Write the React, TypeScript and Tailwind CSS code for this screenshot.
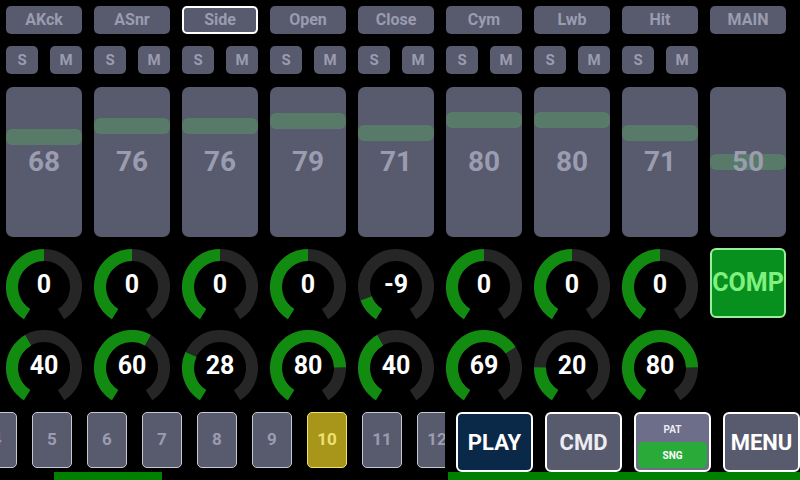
import React from 'react';

type Channel = { name: string; vol: number; pitch: number; level: number; selected?: boolean };

const channels: Channel[] = [
    { name: 'AKck', vol: 68, pitch: 0, level: 40 },
    { name: 'ASnr', vol: 76, pitch: 0, level: 60 },
    { name: 'Side', vol: 76, pitch: 0, level: 28, selected: true },
    { name: 'Open', vol: 79, pitch: 0, level: 80 },
    { name: 'Close', vol: 71, pitch: -9, level: 40 },
    { name: 'Cym', vol: 80, pitch: 0, level: 69 },
    { name: 'Lwb', vol: 80, pitch: 0, level: 20 },
    { name: 'Hit', vol: 71, pitch: 0, level: 80 },
];

const steps = [4, 5, 6, 7, 8, 9, 10, 11, 12];
const ACTIVE_STEP = 10;

const START = -148;
const SWEEP = 296;

const polar = (deg: number, r: number) => {
    const rad = (deg * Math.PI) / 180;
    return [38 + r * Math.sin(rad), 38 - r * Math.cos(rad)];
};

const arc = (from: number, to: number, r: number) => {
    const [x1, y1] = polar(from, r);
    const [x2, y2] = polar(to, r);
    const large = to - from > 180 ? 1 : 0;
    return `M ${x1} ${y1} A ${r} ${r} 0 ${large} 1 ${x2} ${y2}`;
};

const Knob: React.FC<{ value: number; min: number; max: number }> = ({ value, min, max }) => {
    const frac = (value - min) / (max - min);
    const end = START + SWEEP * frac;
    return (
        <div className="relative w-[76px] h-[76px]">
            <svg width="76" height="76" viewBox="0 0 76 76">
                <path d={arc(START, START + SWEEP, 32)} fill="none" stroke="#262626" strokeWidth="12" />
                {frac > 0 && <path d={arc(START, end, 32)} fill="none" stroke="#118c11" strokeWidth="12" />}
            </svg>
            <div className="absolute inset-0 flex items-center justify-center pb-1 text-white font-bold text-[25px]">
                {value}
            </div>
        </div>
    );
};

const Fader: React.FC<{ value: number }> = ({ value }) => (
    <div className="relative w-[76px] h-[150px] rounded-[7px] bg-[#585a6e] overflow-hidden">
        <div
            className="absolute left-0 right-0 h-[16px] rounded-[6px] bg-[#587a68]"
            style={{ top: `${Math.max(0, 137 - 1.4 * value)}px` }}
        />
        <div className="absolute inset-0 flex items-center justify-center text-[28px] font-bold text-[#9a9cb0]">
            {value}
        </div>
    </div>
);

export default function App() {
    const grid = 'grid grid-cols-[repeat(9,76px)] gap-x-3 px-[6px]';
    return (
        <div className="w-[800px] h-[480px] bg-black overflow-hidden flex flex-col" style={{ fontFamily: 'Roboto, "Liberation Sans", sans-serif' }}>
            {/* Channel names */}
            <div className={`${grid} pt-[6px]`}>
                {[...channels.map((c) => c.name), 'MAIN'].map((n, i) => (
                    <div
                        key={n}
                        className={`h-[28px] rounded-[5px] bg-[#585a6e] flex items-center justify-center text-[16px] font-bold text-[#9a9cb0] ${i === 2 ? 'border-2 border-white' : ''}`}
                    >
                        {n}
                    </div>
                ))}
            </div>

            {/* Solo / Mute */}
            <div className={`${grid} mt-3`}>
                {channels.map((c) => (
                    <div key={c.name} className="flex justify-between">
                        {['S', 'M'].map((l) => (
                            <div key={l} className="w-[32px] h-[28px] rounded-[5px] bg-[#585a6e] flex items-center justify-center text-[15px] font-bold text-[#9a9cb0]">
                                {l}
                            </div>
                        ))}
                    </div>
                ))}
            </div>

            {/* Faders */}
            <div className={`${grid} mt-[13px]`}>
                {channels.map((c) => (
                    <Fader key={c.name} value={c.vol} />
                ))}
                <Fader value={50} />
            </div>

            {/* Pitch knobs */}
            <div className={`${grid} mt-3`}>
                {channels.map((c) => (
                    <Knob key={c.name} value={c.pitch} min={-12} max={12} />
                ))}
                <div className="h-[70px] -mt-px rounded-[6px] bg-[#07901e] border-2 border-[#98f098] flex items-center justify-center text-[25px] font-bold text-[#80f080]">
                    COMP
                </div>
            </div>

            {/* Level knobs */}
            <div className={`${grid} mt-[5px]`}>
                {channels.map((c) => (
                    <Knob key={c.name} value={c.level} min={0} max={100} />
                ))}
            </div>

            {/* Transport */}
            <div className="flex mt-[6px]">
                <div className="w-[448px] flex flex-col">
                    <div className="w-[445px] h-[60px] overflow-hidden">
                        <div className="flex gap-[15px] -ml-[23px]">
                            {steps.map((s) => (
                                <div
                                    key={s}
                                    className={`shrink-0 w-[40px] h-[56px] rounded-[5px] border-[1.5px] flex items-center justify-center text-[17px] font-bold ${
                                        s === ACTIVE_STEP
                                            ? 'bg-[#a8961a] border-[#f0e070] text-[#f0e070]'
                                            : 'bg-[#585a6e] border-[#c8c8d2] text-[#9a9cb0]'
                                    }`}
                                >
                                    {s}
                                </div>
                            ))}
                        </div>
                    </div>
                    <div className="ml-[54px] w-[108px] h-[8px] bg-[#008000]" />
                </div>
                <div className="flex-1 flex flex-col">
                    <div className="flex gap-3 pl-[8px] h-[60px]">
                        <div className="w-[77px] rounded-[6px] border-2 border-white bg-[#0a2848] flex items-center justify-center text-[22px] font-bold text-white">
                            PLAY
                        </div>
                        <div className="w-[77px] rounded-[6px] border-2 border-white bg-[#585a6e] flex items-center justify-center text-[22px] font-bold text-[#ececf2]">
                            CMD
                        </div>
                        <div className="w-[77px] rounded-[6px] border-2 border-white bg-[#6c6e8a] flex flex-col p-[2px]">
                            <div className="flex-1 flex items-center justify-center text-[10px] font-bold text-[#ececf2]">PAT</div>
                            <div className="flex-1 rounded-[5px] bg-[#2aaa38] flex items-center justify-center text-[10px] font-bold text-white">SNG</div>
                        </div>
                        <div className="w-[77px] rounded-[6px] border-2 border-white bg-[#585a6e] flex items-center justify-center text-[22px] font-bold text-white">
                            MENU
                        </div>
                    </div>
                    <div className="h-[8px] bg-[#008000]" />
                </div>
            </div>
        </div>
    );
}
